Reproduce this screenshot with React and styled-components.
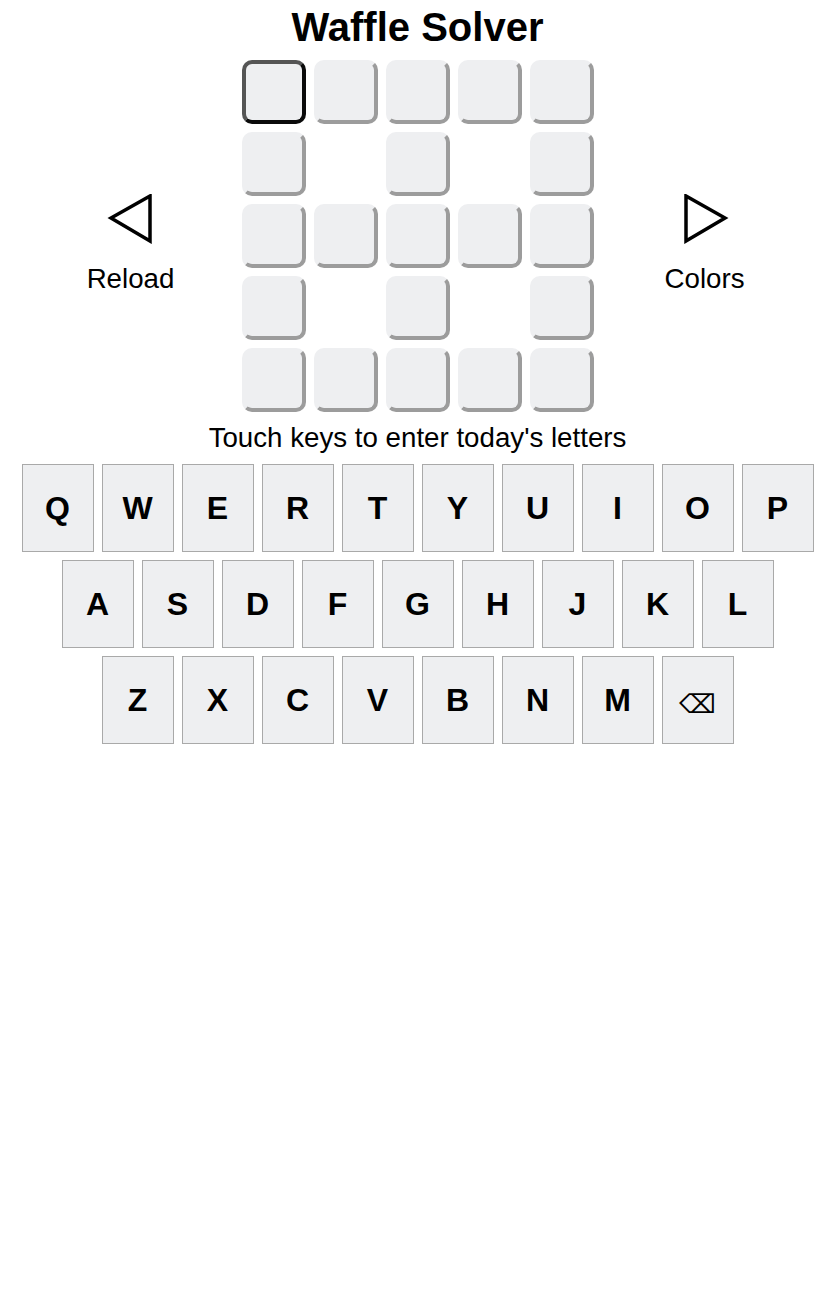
import React, { useState } from 'react'
import styled, { createGlobalStyle } from 'styled-components'

const GlobalStyle = createGlobalStyle`
  html, body {
    margin: 0;
    padding: 0;
    background: #ffffff;
  }
  body {
    font-family: "Liberation Sans", Arial, sans-serif;
    color: #000000;
  }
`

const ROWS = [
  ['Q', 'W', 'E', 'R', 'T', 'Y', 'U', 'I', 'O', 'P'],
  ['A', 'S', 'D', 'F', 'G', 'H', 'J', 'K', 'L'],
  ['Z', 'X', 'C', 'V', 'B', 'N', 'M', '⌫'],
]

// waffle shape: holes at odd row + odd column
const isHole = (r, c) => r % 2 === 1 && c % 2 === 1

const LeftArrow = () => (
  <svg width="48" height="50" viewBox="0 0 48 50">
    <polygon points="4,24 43,2 43,47" fill="none" stroke="#000" strokeWidth="3.5" />
  </svg>
)

const RightArrow = () => (
  <svg width="48" height="50" viewBox="0 0 48 50">
    <polygon points="5,2 5,47 44,24" fill="none" stroke="#000" strokeWidth="3.5" />
  </svg>
)

export default function App() {
  const [letters, setLetters] = useState([])
  const cells = []
  for (let r = 0; r < 5; r++) {
    for (let c = 0; c < 5; c++) {
      cells.push({ r, c })
    }
  }
  const filled = cells.filter((x) => !isHole(x.r, x.c))

  const press = (k) => {
    if (k === '⌫') {
      setLetters(letters.slice(0, -1))
    } else if (letters.length < filled.length) {
      setLetters([...letters, k])
    }
  }

  return (
    <Page>
      <GlobalStyle />
      <Title>Waffle Solver</Title>
      <BoardRow>
        <Side>
          <LeftArrow />
          <SideLabel>Reload</SideLabel>
        </Side>
        <Grid>
          {cells.map(({ r, c }) => {
            if (isHole(r, c)) return <Hole key={r + '-' + c} />
            const idx = filled.findIndex((f) => f.r === r && f.c === c)
            return (
              <Tile key={r + '-' + c} $active={idx === letters.length}>
                {letters[idx] || ''}
              </Tile>
            )
          })}
        </Grid>
        <Side>
          <RightArrow />
          <SideLabel>Colors</SideLabel>
        </Side>
      </BoardRow>
      <Hint>Touch keys to enter today's letters</Hint>
      <Keyboard>
        {ROWS.map((row, i) => (
          <KeyRow key={i}>
            {row.map((k) => (
              <Key key={k} $symbol={k === '⌫'} onClick={() => press(k)}>
                {k}
              </Key>
            ))}
          </KeyRow>
        ))}
      </Keyboard>
    </Page>
  )
}

const Page = styled.div`
display: flex;
flex-direction: column;
align-items: center;
width: 100%;
`

const Title = styled.h1`
margin: 0;
padding-top: 3px;
font-size: 40px;
line-height: 48px;
font-weight: bold;
`

const BoardRow = styled.div`
display: flex;
justify-content: center;
align-items: center;
gap: 36px;
margin-top: 9px;
`

const Side = styled.div`
width: 150px;
display: flex;
flex-direction: column;
align-items: center;
padding-top: 16px;
gap: 19px;
`

const SideLabel = styled.div`
font-size: 27.7px;
line-height: 32px;
`

const Grid = styled.div`
display: grid;
grid-template-columns: repeat(5, 64px);
grid-auto-rows: 64px;
gap: 8px;
`

const Hole = styled.div``

const Tile = styled.div`
box-sizing: border-box;
width: 64px;
height: 64px;
border-radius: 10px;
border: 4px solid;
border-color: ${(p) => (p.$active ? '#555555 #0a0a0a #0a0a0a #555555' : '#eeeff1 #9c9c9c #9c9c9c #eeeff1')};
background: #eeeff1;
display: flex;
align-items: center;
justify-content: center;
font-size: 36px;
font-weight: bold;
text-transform: uppercase;
`

const Hint = styled.div`
margin-top: 10px;
font-size: 27.7px;
line-height: 32px;
`

const Keyboard = styled.div`
display: flex;
flex-direction: column;
gap: 8px;
margin-top: 10px;
`

const KeyRow = styled.div`
display: flex;
justify-content: center;
gap: 8px;
`

const Key = styled.button`
box-sizing: border-box;
width: 72px;
height: 88px;
padding: ${(p) => (p.$symbol ? '8px 0 0' : '0')};
border: 1px solid #a9a9a9;
border-radius: 0;
background: #eeeff1;
color: #000000;
font-family: ${(p) => (p.$symbol ? '"DejaVu Sans", sans-serif' : '"Liberation Sans", Arial, sans-serif')};
font-size: ${(p) => (p.$symbol ? '26px' : '32px')};
font-weight: ${(p) => (p.$symbol ? 'normal' : 'bold')};
cursor: pointer;
`
